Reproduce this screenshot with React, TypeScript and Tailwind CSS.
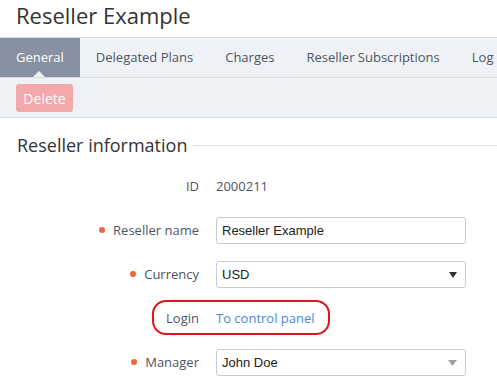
import React from "react";

function Dot() {
  return <span className="inline-block w-[6px] h-[6px] rounded-full bg-[#f0643c] mr-[8px] relative top-[-1px]" />;
}

function Row({ label, required, children }: { label: string; required?: boolean; children: React.ReactNode }) {
  return (
    <div className="flex items-center h-[27px]">
      <div className="w-[199px] flex items-center justify-end text-[13px] text-[#4d5561]">
        {required && <Dot />}
        <span>{label}</span>
      </div>
      <div className="ml-[17px] flex-1 flex items-center">{children}</div>
    </div>
  );
}

function Box({ children, arrow }: { children: React.ReactNode; arrow?: "dark" | "light" }) {
  return (
    <div className="w-[250px] h-[27px] border border-[#c6ccd4] rounded-[3px] bg-white flex items-center pl-[5px] pr-[8px] font-['Liberation_Sans'] text-[13px] text-[#222]">
      <span className="flex-1">{children}</span>
      {arrow === "dark" && (
        <svg width="8" height="6" viewBox="0 0 8 6"><path d="M0 0 H8 L4 6 Z" fill="#333" /></svg>
      )}
      {arrow === "light" && (
        <svg width="9" height="6" viewBox="0 0 9 6"><path d="M0 0 H9 L4.5 6 Z" fill="#9aa1aa" /></svg>
      )}
    </div>
  );
}

export default function App() {
  const tabs = ["Delegated Plans", "Charges", "Reseller Subscriptions", "Log"];
  return (
    <div className="w-[497px] h-[384px] overflow-hidden bg-white font-['Open_Sans',sans-serif] relative">
      <h1 className="pl-[16px] pt-[0px] h-[37px] text-[22px] leading-[30px] text-[#333]">Reseller Example</h1>
      <div className="border-t border-[#d7dce2] bg-[#eef2f6]">
        <div className="flex h-[40px] border-b border-[#d7dce2] text-[13px] text-[#4d5561] whitespace-nowrap">
          <div className="relative bg-[#8891a2] text-white px-[16px] flex items-center">
            General
            <span className="absolute left-[33px] bottom-0 w-0 h-0 border-l-[6px] border-r-[6px] border-b-[6px] border-l-transparent border-r-transparent border-b-[#eef2f6]" />
          </div>
          {tabs.map((t) => (
            <div key={t} className="px-[16px] flex items-center">{t}</div>
          ))}
        </div>
        <div className="h-[40px] border-b border-[#d7dce2] pl-[16px] pt-[6px]">
          <div className="w-[57px] h-[28px] rounded-[3px] bg-[#f3a8ab] text-white text-[14px] flex items-center justify-center">Delete</div>
        </div>
      </div>
      <div className="flex items-center pl-[17px] mt-[15px] h-[24px]">
        <span className="text-[18px] text-[#333] leading-none">Reseller information</span>
        <div className="flex-1 h-px bg-[#dcdfe3] ml-[6px]" />
      </div>
      <div className="mt-[16px] flex flex-col gap-[17px]">
        <Row label="ID">
          <span className="text-[13px] text-[#4d5561]">2000211</span>
        </Row>
        <Row label="Reseller name" required>
          <Box>Reseller Example</Box>
        </Row>
        <Row label="Currency" required>
          <Box arrow="dark">USD</Box>
        </Row>
        <Row label="Login">
          <span className="text-[13px] text-[#4a8ad6]">To control panel</span>
        </Row>
        <Row label="Manager" required>
          <Box arrow="light">John Doe</Box>
        </Row>
      </div>
      <div className="absolute left-[152px] top-[300px] w-[178px] h-[35px] border-2 border-[#e3121b] rounded-[14px]" />
    </div>
  );
}
